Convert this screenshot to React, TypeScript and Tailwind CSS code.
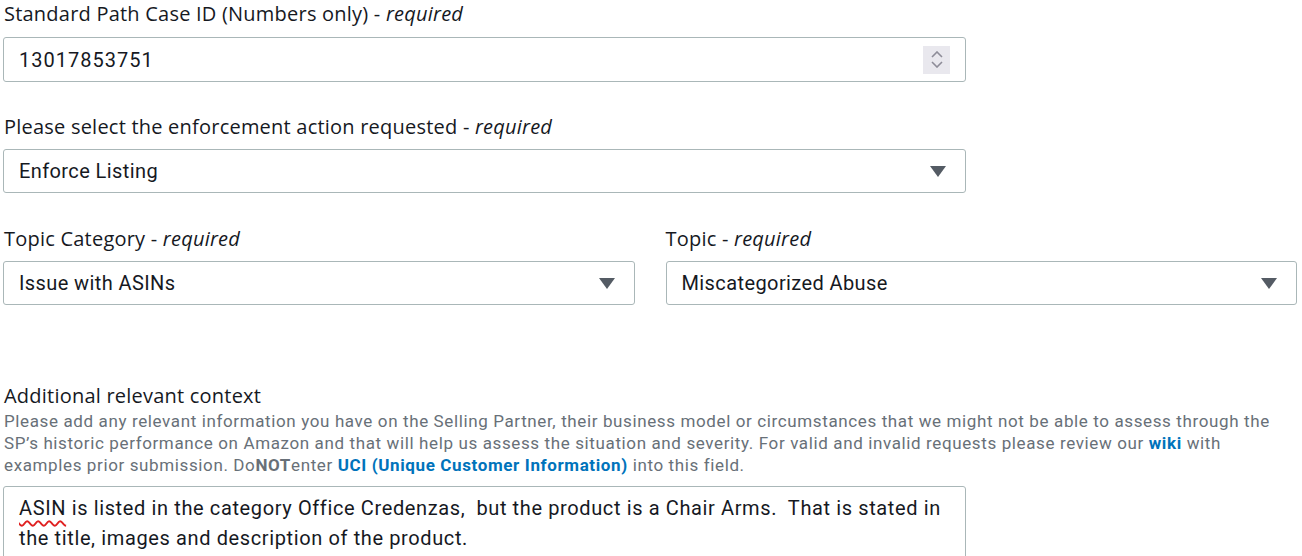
import React from 'react';

const Required = () => (
  <>
    {' '}- <i>required</i>
  </>
);

const Caret = () => (
  <svg width="16" height="11" viewBox="0 0 16 11" className="shrink-0">
    <path d="M0 0h16L8 11z" fill="#545b64" />
  </svg>
);

const Spinner = () => (
  <div className="flex h-[28px] w-[27px] flex-col items-center justify-center gap-[3px] bg-[#e9e8ee]">
    <svg width="12" height="7" viewBox="0 0 12 7">
      <path d="M1 6l5-5 5 5" fill="none" stroke="#8d8c98" strokeWidth="1.6" />
    </svg>
    <svg width="12" height="7" viewBox="0 0 12 7">
      <path d="M1 1l5 5 5-5" fill="none" stroke="#8d8c98" strokeWidth="1.6" />
    </svg>
  </div>
);

const Label: React.FC<{ children: React.ReactNode; className?: string }> = ({
  children,
  className = 'pl-px',
}) => (
  <div
    className={`text-[20px] leading-[28px] tracking-[0.22px] text-[#16191f] ${className}`}
    style={{ fontFamily: '"Open Sans", sans-serif' }}
  >
    {children}
  </div>
);

const SelectBox: React.FC<{ value: string }> = ({ value }) => (
  <div className="mt-2 flex h-[44px] items-center justify-between rounded-[3px] border border-[#aab7b8] bg-white pl-[15px] pr-[19px] text-[20px] tracking-[0.4px] text-[#16191f]">
    <span>{value}</span>
    <Caret />
  </div>
);

export default function App() {
  return (
    <div
      className="h-[556px] overflow-hidden bg-white pl-[3px]"
      style={{ fontFamily: 'Roboto, "Noto Sans", sans-serif' }}
    >
      <div className="w-[963px]">
        <Label>
          Standard Path Case ID (Numbers only)
          <Required />
        </Label>
        <div className="mt-[9px] flex h-[45px] items-center justify-between rounded-[3px] border border-[#aab7b8] bg-white pl-[15px] pr-[15px] text-[20px] text-[#16191f]">
          <span className="tracking-[1px]">13017853751</span>
          <Spinner />
        </div>

        <div className="mt-[31px]">
          <Label>
            Please select the enforcement action requested
            <Required />
          </Label>
          <SelectBox value="Enforce Listing" />
        </div>
      </div>

      <div className="mt-[32px] grid w-[1294px] grid-cols-2 gap-x-[31px]">
        <div>
          <Label>
            Topic Category
            <Required />
          </Label>
          <SelectBox value="Issue with ASINs" />
        </div>
        <div>
          <Label className="">
            Topic
            <Required />
          </Label>
          <SelectBox value="Miscategorized Abuse" />
        </div>
      </div>

      <div className="mt-[77px] w-[1294px]">
        <Label>Additional relevant context</Label>
        <p className="pl-px text-[17px] leading-[22px] tracking-[0.62px] text-[#687078]">
          Please add any relevant information you have on the Selling Partner, their business model
          or circumstances that we might not be able to assess through the SP’s historic performance
          on Amazon and that will help us assess the situation and severity. For valid and invalid
          requests please review our{' '}
          <a href="#" className="font-bold text-[#0073bb]">
            wiki
          </a>{' '}
          with examples prior submission. Do<b>NOT</b>enter{' '}
          <a href="#" className="font-bold text-[#0073bb]">
            UCI (Unique Customer Information)
          </a>{' '}
          into this field.
        </p>
        <div className="mt-[10px] h-[120px] w-[963px] rounded-[3px] border border-[#aab7b8] bg-white pl-[15px] pr-[20px] pt-[6px] text-[20px] leading-[30px] tracking-[0.62px] text-[#16191f]">
          <span className="underline decoration-[#e02020] decoration-wavy decoration-[1.5px] underline-offset-[5px]">
            ASIN
          </span>{' '}
          is listed in the category Office Credenzas,&nbsp; but the product is a Chair Arms.&nbsp;
          That is stated in the title, images and description of the product.
        </div>
      </div>
    </div>
  );
}
